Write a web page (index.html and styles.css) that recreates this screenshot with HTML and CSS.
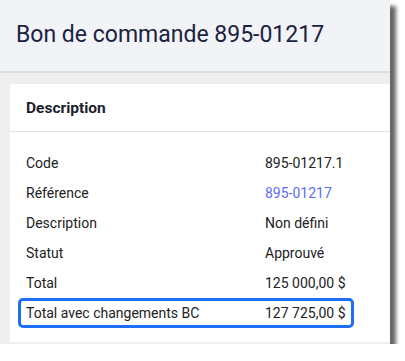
FILE: index.html
```html
<!DOCTYPE html>
<html lang="fr">
<head>
    <meta charset="UTF-8">
    <meta name="viewport" content="width=device-width, initial-scale=1.0">
    <title>Bon de commande 895-01217</title>
    <link rel="stylesheet" href="styles.css">
</head>
<body>
    <div class="frame">
        <header class="page-header">
            <h1>Bon de commande 895-01217</h1>
        </header>

        <div class="page-content">
            <section class="card">
                <h2 class="card-title">Description</h2>
                <div class="details">
                    <div class="row">
                        <span class="label">Code</span>
                        <span class="value">895-01217.1</span>
                    </div>
                    <div class="row">
                        <span class="label">Référence</span>
                        <a class="value link" href="#">895-01217</a>
                    </div>
                    <div class="row">
                        <span class="label">Description</span>
                        <span class="value">Non défini</span>
                    </div>
                    <div class="row">
                        <span class="label">Statut</span>
                        <span class="value">Approuvé</span>
                    </div>
                    <div class="row">
                        <span class="label">Total</span>
                        <span class="value">125 000,00 $</span>
                    </div>
                    <div class="row highlight">
                        <span class="label">Total avec changements BC</span>
                        <span class="value">127 725,00 $</span>
                    </div>
                </div>
            </section>
        </div>
    </div>
</body>
</html>
```

FILE: styles.css
```css
* {
    margin: 0;
    padding: 0;
    box-sizing: border-box;
}

body {
    background: #ffffff;
    font-family: Roboto, 'Liberation Sans', Arial, sans-serif;
    color: #222;
}

.frame {
    width: 390px;
    height: 344px;
    display: flex;
    flex-direction: column;
    background: #efefef;
    box-shadow: 6px 6px 4px rgba(0, 0, 0, 0.6);
    overflow: hidden;
}

.page-header {
    height: 73px;
    background: #f2f3f7;
    border-bottom: 2px solid #dedfe2;
    padding: 0 16px;
    display: flex;
    align-items: center;
}

h1 {
    font-size: 23px;
    font-weight: 400;
    color: #1b2240;
    margin-top: -2px;
}

.page-content {
    flex: 1;
    padding: 11px 0 2px 10px;
    display: flex;
}

.card {
    flex: 1;
    background: #ffffff;
}

.card-title {
    height: 48px;
    padding: 0 16px;
    display: flex;
    align-items: center;
    font-size: 15.5px;
    font-weight: 700;
    color: #1c1f2e;
    border-bottom: 1px solid #e1e1e1;
}

.details {
    padding: 16px 37px 0 8px;
}

.row {
    height: 30px;
    display: grid;
    grid-template-columns: 239px 1fr;
    align-items: center;
    padding: 0 5px;
    border: 3px solid transparent;
    border-radius: 5px;
    font-size: 14px;
    white-space: nowrap;
}

.link {
    color: #5b6cf9;
    text-decoration: none;
}

.highlight {
    border-color: #1f6ff4;
}
```
